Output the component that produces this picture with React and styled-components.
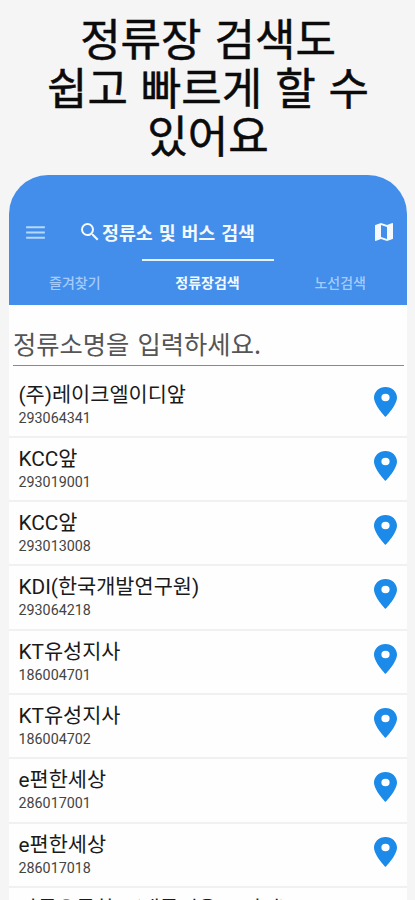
import React from 'react';
import styled, { createGlobalStyle } from 'styled-components';

const Global = createGlobalStyle`
  * { box-sizing: border-box; }
  html, body { margin: 0; background: #f5f5f5; }
  body { width: 415px; height: 900px; overflow: hidden; font-family: Roboto, "Noto Sans CJK KR", sans-serif; }
`;
const Page = styled.main`
  height: 900px; overflow: hidden; padding: 13px 8px 0 9px;
`;
const Headline = styled.h1`
  margin: 0; height: 162px; text-align: center; white-space: nowrap;
  font: 400 44px/48.5px "Noto Sans CJK KR", sans-serif; color: #0b0b0b;
  word-spacing: 3px;
  -webkit-text-stroke: 0.5px #0b0b0b;
`;
const Phone = styled.section`
  height: 740px; background: #fefefe; border-radius: 39px 39px 0 0; overflow: hidden;
`;
const Header = styled.header`
  height: 130px; background: #438eea; padding-top: 35px; color: #f3f9ff;
`;
const Toolbar = styled.div`
  display: flex; align-items: center; height: 44px; padding: 0 11px 0 14px;
`;
const Title = styled.div`
  flex: 1; display: flex; align-items: center; margin-left: 30px;
  font: 700 18.4px/26px "Noto Sans CJK KR", sans-serif; white-space: nowrap;
  word-spacing: 1.7px;
`;
const Tabs = styled.nav`
  display: grid; grid-template-columns: repeat(3, 1fr); margin-top: 5px; height: 46px;
`;
const Tab = styled.div`
  border-top: 2px solid ${p => (p.$active ? '#e6f3ff' : 'transparent')};
  color: ${p => (p.$active ? '#f3f9ff' : '#a4cbfb')};
  font: ${p => (p.$active ? 700 : 500)} 14px/20px "Noto Sans CJK KR", sans-serif;
  padding: 11px 1px 0 0; text-align: center;
`;
const Search = styled.div`
  height: 61px; margin: 0 3px 0 4px; padding-top: 21px; border-bottom: 1px solid #8a8a8a;
  font: 400 25.3px/34px "Noto Sans CJK KR", sans-serif; color: #555;
  word-spacing: 2.5px;
`;
const List = styled.ul` list-style: none; margin: 0; padding: 7.6px 0 0; `;
const Row = styled.li`
  display: flex; justify-content: space-between; height: 64.3px; padding: 6px 10px 0 9.5px;
  border-bottom: 2px solid #f1f1f1;
`;
const Name = styled.div` font-size: 20.8px; line-height: 30px; color: #1a1a1a; white-space: nowrap; `;
const Code = styled.div` font-size: 14.3px; line-height: 17px; color: #444; `;
const PinIcon = styled.svg` width: 23px; height: 30px; margin-top: 7px; fill: #1b8ae8; `;
const Icon = styled.svg` width: ${p => p.$s}px; height: ${p => p.$s}px; fill: ${p => p.$c || '#f3f9ff'}; flex: none; `;

const stops = [
  ['(주)레이크엘이디앞', '293064341'], ['KCC앞', '293019001'], ['KCC앞', '293013008'],
  ['KDI(한국개발연구원)', '293064218'], ['KT유성지사', '186004701'], ['KT유성지사', '186004702'],
  ['e편한세상', '286017001'], ['e편한세상', '286017018'], ['가톨유통학교(배롤리움노-건너)', '286017020'],
];

export default function App() {
  return (
    <>
      <Global />
      <Page>
        <Headline>정류장 검색도<br />쉽고 빠르게 할 수<br />있어요</Headline>
        <Phone>
          <Header>
            <Toolbar>
              <Icon viewBox="0 0 24 24" $s={25} $c="#b5d8fd"><path d="M3 18h18v-2H3v2zm0-5h18v-2H3v2zm0-7v2h18V6H3z" /></Icon>
              <Title>
                <Icon viewBox="0 0 24 24" $s={24}><path d="M15.5 14h-.79l-.28-.27A6.47 6.47 0 0 0 16 9.5 6.5 6.5 0 1 0 9.5 16c1.61 0 3.09-.59 4.23-1.57l.27.28v.79l5 4.99L20.49 19l-4.99-5zm-6 0C7.01 14 5 11.99 5 9.5S7.01 5 9.5 5 14 7.01 14 9.5 11.99 14 9.5 14z" /></Icon>
                정류소 및 버스 검색
              </Title>
              <Icon viewBox="0 0 24 24" $s={24}><path d="M20.5 3l-.16.03L15 5.1 9 3 3.36 4.9c-.21.07-.36.25-.36.48V20.5c0 .28.22.5.5.5l.16-.03L9 18.9l6 2.1 5.64-1.9c.21-.07.36-.25.36-.48V3.5c0-.28-.22-.5-.5-.5zM15 19l-6-2.11V5l6 2.11V19z" /></Icon>
            </Toolbar>
            <Tabs><Tab>즐겨찾기</Tab><Tab $active>정류장검색</Tab><Tab>노선검색</Tab></Tabs>
          </Header>
          <Search>정류소명을 입력하세요.</Search>
          <List>
            {stops.map(([name, code], i) => (
              <Row key={i}>
                <div><Name>{name}</Name><Code>{code}</Code></div>
                <PinIcon viewBox="5 2 14 20" preserveAspectRatio="none"><path d="M12 2C8.13 2 5 5.13 5 9c0 5.25 7 13 7 13s7-7.75 7-13c0-3.87-3.13-7-7-7zm0 9.5a2.5 2.5 0 0 1 0-5 2.5 2.5 0 0 1 0 5z" /></PinIcon>
              </Row>
            ))}
          </List>
        </Phone>
      </Page>
    </>
  );
}
